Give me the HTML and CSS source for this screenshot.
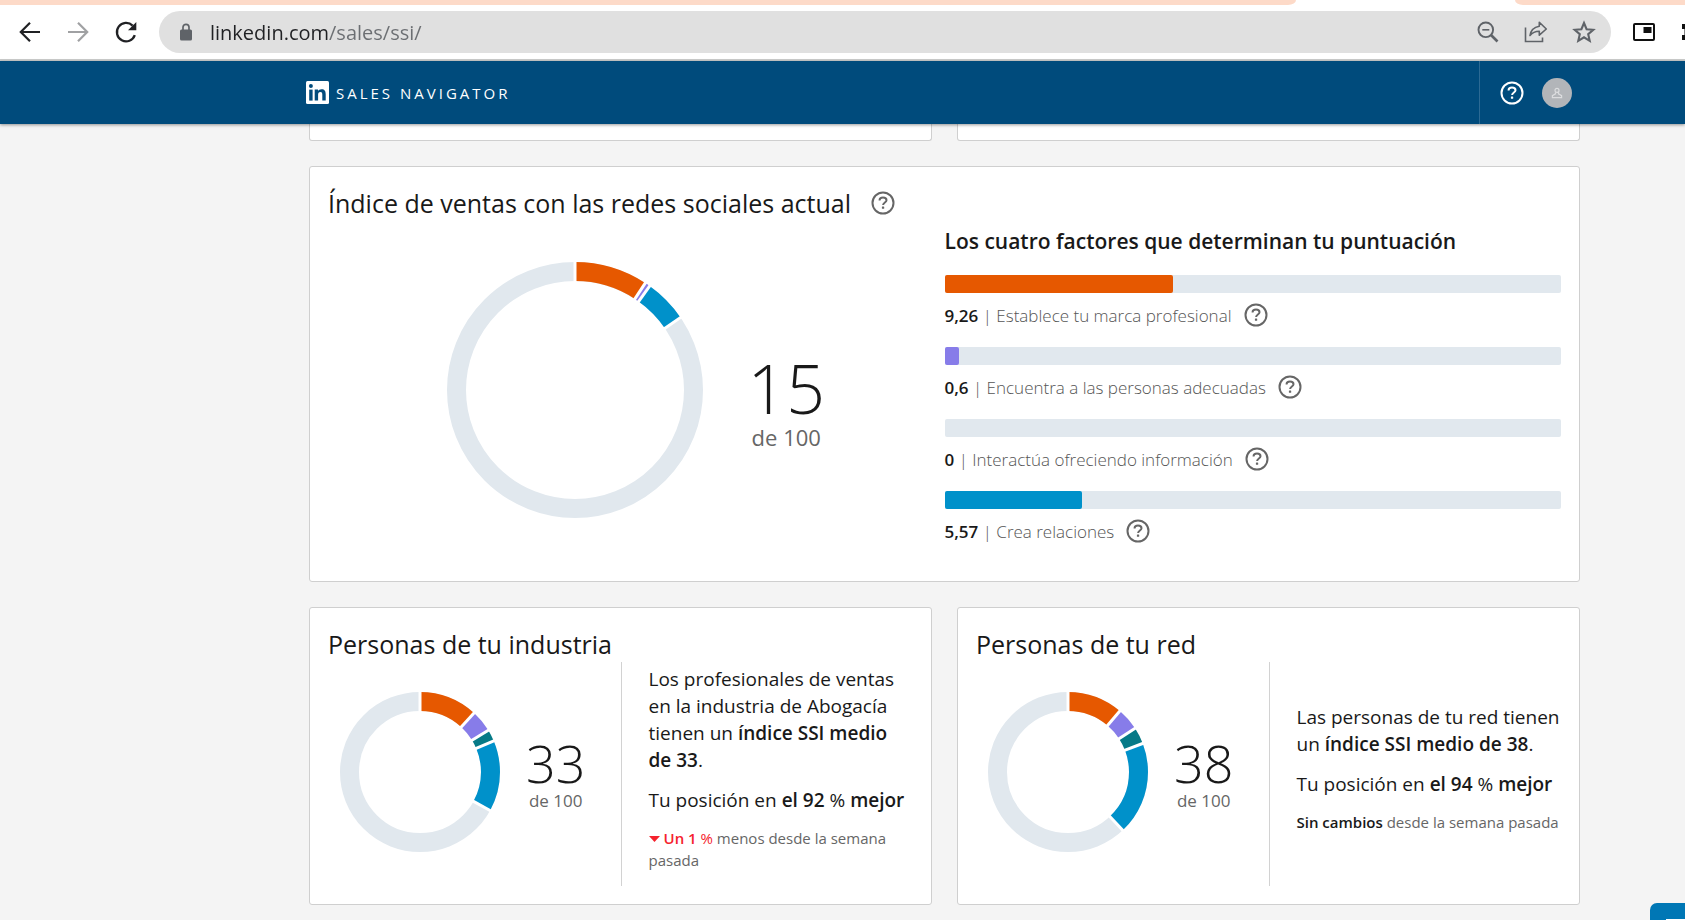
FILE: index.html
```html
<!DOCTYPE html>
<html lang="es">
<head>
<meta charset="utf-8">
<title>Social Selling Index</title>
<link rel="stylesheet" href="styles.css">
</head>
<body>
<svg class="defs" aria-hidden="true">
  <symbol id="help" viewBox="0 0 24 24">
    <circle cx="12" cy="12" r="10.5" fill="none" stroke="currentColor" stroke-width="2"/>
    <path d="M8.6 9.6V9c0-1.400 1.300-2.500 3.400-2.500s3.500 1.100 3.500 2.700c0 2.200-3.400 2.400-3.400 4.800" fill="none" stroke="currentColor" stroke-width="2"/>
    <rect x="10.900" y="15.500" width="2.300" height="2.300" rx=".5" fill="currentColor"/>
  </symbol>
</svg>

<header class="browser">
  <div class="tabs"><span class="tab-strip tab-strip-left"></span><span class="tab-strip tab-strip-right"></span></div>
  <div class="toolbar">
    <button class="tool back" aria-label="Atrás"><svg viewBox="0 0 24 24"><path d="M22 12H3.500M12 2.800 2.800 12l9.200 9.200" fill="none" stroke="currentColor" stroke-width="2.200"/></svg></button>
    <button class="tool forward" aria-label="Adelante"><svg viewBox="0 0 24 24"><path d="M2 12h18.500M12 2.800l9.200 9.200-9.200 9.200" fill="none" stroke="currentColor" stroke-width="2.200"/></svg></button>
    <button class="tool reload" aria-label="Recargar"><svg viewBox="0 0 24 24"><path d="M20.800 15.200A9.200 9.200 0 1 1 18.600 5.600" fill="none" stroke="currentColor" stroke-width="2.300"/><path d="M22.300 2v8.300H14z" fill="currentColor"/></svg></button>
    <div class="omnibox">
      <svg class="lock" viewBox="0 0 12 18" aria-hidden="true"><path d="M3 7V4.300a3 3 0 0 1 6 0V7" fill="none" stroke="currentColor" stroke-width="1.700"/><rect x="0" y="6.500" width="12" height="11" rx="1.500" fill="currentColor"/></svg>
      <input class="address" type="text" aria-label="Dirección" value="linkedin.com/sales/ssi/">
      <button class="tool" aria-label="Zoom"><svg viewBox="0 0 24 24"><circle cx="9.800" cy="9.800" r="7.300" fill="none" stroke="currentColor" stroke-width="1.900"/><path d="M6.300 9.800h7" stroke="currentColor" stroke-width="1.600"/><path d="M15 15l6.500 6.500" stroke="currentColor" stroke-width="2.600"/></svg></button>
      <button class="tool" aria-label="Compartir"><svg viewBox="0 0 24 24"><path d="M1.500 7.500v14h17v-4" fill="none" stroke="currentColor" stroke-width="1.600"/><path d="M15.300 2.200 22.300 9l-7 6.200v-4c-4.300 0-7 1.300-9.300 4.300.7-5 3.800-8.300 9.300-9.300z" fill="none" stroke="currentColor" stroke-width="1.600" stroke-linejoin="round"/></svg></button>
      <button class="tool" aria-label="Añadir a marcadores"><svg viewBox="0 0 24 24"><path d="M12 3l2.600 6.200 6.700.6-5.100 4.400 1.500 6.600L12 17.300l-5.700 3.500 1.500-6.600-5.100-4.400 6.700-.6z" fill="none" stroke="currentColor" stroke-width="2.100"/></svg></button>
    </div>
    <button class="tool pip" aria-label="Imagen en imagen"><svg viewBox="0 0 24 24"><rect x="2" y="4" width="20" height="16" rx="1" fill="none" stroke="currentColor" stroke-width="2"/><rect x="11.500" y="7" width="8" height="6" fill="currentColor"/></svg></button>
    <button class="tool extensions" aria-label="Extensiones"><svg viewBox="0 0 24 24"><path d="M4 4h12v16H4v-5h2.500V9H4z" fill="currentColor"/></svg></button>
  </div>
</header>

<nav class="nav">
  <a class="brand" href="#" aria-label="Sales Navigator">
    <svg class="brand-mark" viewBox="0 0 23 23" aria-hidden="true"><rect width="23" height="23" rx="1.500" fill="#fff"/><g fill="#004b7c"><circle cx="4.900" cy="5.100" r="2"/><rect x="3.200" y="8.600" width="3.400" height="11"/><path d="M8.700 8.600H12v1.500c.6-1.100 1.800-1.800 3.500-1.800 3.300 0 4.200 2 4.200 5v6.300h-3.400v-5.800c0-1.500-.2-2.700-1.900-2.700s-2.300 1.200-2.300 2.700v5.800H8.700z"/></g></svg>
    <span>SALES NAVIGATOR</span>
  </a>
  <div class="nav-tools">
    <button class="icon-button" aria-label="Ayuda"><svg><use href="#help"/></svg></button>
    <button class="avatar" aria-label="Tu cuenta"><svg viewBox="0 0 12 12"><circle cx="6" cy="3.400" r="2" fill="none" stroke="currentColor" stroke-width="1.200"/><path d="M4.500 5.300v1.500L1.400 8.700v2h9.200v-2L7.500 6.800V5.300" fill="none" stroke="currentColor" stroke-width="1.200"/></svg></button>
  </div>
</nav>

<main class="page">
  <div class="row">
    <div class="card card-tail"></div>
    <div class="card card-tail"></div>
  </div>

  <section class="card current">
    <div class="current-left">
      <h1 class="title">Índice de ventas con las redes sociales actual <button class="icon-button" aria-label="Más información"><svg><use href="#help"/></svg></button></h1>
      <div class="gauge">
        <svg class="donut donut-large" viewBox="-128 -128 256 256" role="img" aria-label="15 de 100">
          <g fill="none" stroke-width="19" transform="rotate(-90)">
            <circle r="118.500" stroke="#e1e8ee"/>
            <circle r="118.500" stroke="#e65800" pathLength="360" stroke-dasharray="33.300 360"/>
            <circle r="118.500" stroke="#877ce9" pathLength="360" stroke-dasharray="2.200 360" stroke-dashoffset="-33.300"/>
            <circle r="118.500" stroke="#0091ca" pathLength="360" stroke-dasharray="20 360" stroke-dashoffset="-35.500"/>
          </g>
          <g stroke="#fff" stroke-width="3">
            <path d="M0-107v-23"/>
            <path d="M0-107v-23" transform="rotate(33.300)"/>
            <path d="M0-107v-23" transform="rotate(35.700)"/>
            <path d="M0-107v-23" transform="rotate(55.500)"/>
          </g>
        </svg>
        <p class="score score-large"><span class="score-value">15</span><span class="score-total">de 100</span></p>
      </div>
    </div>
    <div class="factors">
      <h2 class="factors-title">Los cuatro factores que determinan tu puntuación</h2>
      <ul class="factor-list">
        <li class="factor"><div class="bar"><div class="fill orange" style="width:37%"></div></div><p class="factor-label"><span><b>9,26</b> | Establece tu marca profesional</span><button class="icon-button" aria-label="Más información"><svg><use href="#help"/></svg></button></p></li>
        <li class="factor"><div class="bar"><div class="fill purple" style="width:2.4%"></div></div><p class="factor-label"><span><b>0,6</b> | Encuentra a las personas adecuadas</span><button class="icon-button" aria-label="Más información"><svg><use href="#help"/></svg></button></p></li>
        <li class="factor"><div class="bar"></div><p class="factor-label"><span><b>0</b> | Interactúa ofreciendo información</span><button class="icon-button" aria-label="Más información"><svg><use href="#help"/></svg></button></p></li>
        <li class="factor"><div class="bar"><div class="fill blue" style="width:22.3%"></div></div><p class="factor-label"><span><b>5,57</b> | Crea relaciones</span><button class="icon-button" aria-label="Más información"><svg><use href="#help"/></svg></button></p></li>
      </ul>
    </div>
  </section>

  <div class="row">
    <section class="card group">
      <h2 class="title">Personas de tu industria</h2>
      <div class="group-body">
        <div class="group-gauge">
          <svg class="donut donut-small" viewBox="-80 -80 160 160" role="img" aria-label="33 de 100">
            <g fill="none" stroke-width="19" transform="rotate(-90)">
              <circle r="70.500" stroke="#e1e8ee"/>
              <circle r="70.500" stroke="#e65800" pathLength="360" stroke-dasharray="42.500 360"/>
              <circle r="70.500" stroke="#877ce9" pathLength="360" stroke-dasharray="16.100 360" stroke-dashoffset="-42.500"/>
              <circle r="70.500" stroke="#067a87" pathLength="360" stroke-dasharray="8.600 360" stroke-dashoffset="-58.600"/>
              <circle r="70.500" stroke="#0091ca" pathLength="360" stroke-dasharray="51.600 360" stroke-dashoffset="-67.200"/>
            </g>
            <g stroke="#fff" stroke-width="3">
              <path d="M0-59v-23"/>
              <path d="M0-59v-23" transform="rotate(42.500)"/>
              <path d="M0-59v-23" transform="rotate(58.600)"/>
              <path d="M0-59v-23" transform="rotate(67.200)"/>
              <path d="M0-59v-23" transform="rotate(118.800)"/>
            </g>
          </svg>
          <p class="score score-small"><span class="score-value">33</span><span class="score-total">de 100</span></p>
        </div>
        <div class="summary">
          <p>Los profesionales de ventas en la industria de Abogacía tienen un <b>índice SSI medio de 33</b>.</p>
          <p>Tu posición en <b>el 92</b> % <b>mejor</b></p>
          <p class="change"><svg class="down" viewBox="0 0 11 6" aria-hidden="true"><path d="M0 0h11L5.500 6z" fill="currentColor"/></svg><span class="loss"><b>Un 1</b> %</span> menos desde la semana pasada</p>
        </div>
      </div>
    </section>
    <section class="card group">
      <h2 class="title">Personas de tu red</h2>
      <div class="group-body">
        <div class="group-gauge">
          <svg class="donut donut-small" viewBox="-80 -80 160 160" role="img" aria-label="38 de 100">
            <g fill="none" stroke-width="19" transform="rotate(-90)">
              <circle r="70.500" stroke="#e1e8ee"/>
              <circle r="70.500" stroke="#e65800" pathLength="360" stroke-dasharray="40.400 360"/>
              <circle r="70.500" stroke="#877ce9" pathLength="360" stroke-dasharray="16.500 360" stroke-dashoffset="-40.400"/>
              <circle r="70.500" stroke="#067a87" pathLength="360" stroke-dasharray="12.200 360" stroke-dashoffset="-56.900"/>
              <circle r="70.500" stroke="#0091ca" pathLength="360" stroke-dasharray="67.700 360" stroke-dashoffset="-69.100"/>
            </g>
            <g stroke="#fff" stroke-width="3">
              <path d="M0-59v-23"/>
              <path d="M0-59v-23" transform="rotate(40.400)"/>
              <path d="M0-59v-23" transform="rotate(56.900)"/>
              <path d="M0-59v-23" transform="rotate(69.100)"/>
              <path d="M0-59v-23" transform="rotate(136.800)"/>
            </g>
          </svg>
          <p class="score score-small"><span class="score-value">38</span><span class="score-total">de 100</span></p>
        </div>
        <div class="summary">
          <p>Las personas de tu red tienen un <b>índice SSI medio de 38</b>.</p>
          <p>Tu posición en <b>el 94</b> % <b>mejor</b></p>
          <p class="change"><b>Sin cambios</b> desde la semana pasada</p>
        </div>
      </div>
    </section>
  </div>
</main>

<button class="chat" aria-label="Chat"><svg viewBox="0 0 24 24"><path d="M1 1h22v16H9l-5 5v-5H1z" fill="none" stroke="currentColor" stroke-width="2"/></svg></button>
</body>
</html>
```
FILE: styles.css
```css
* { box-sizing: border-box; }

body {
  margin: 0;
  height: 100vh;
  overflow: hidden;
  background: #f4f4f4;
  color: #191919;
  font-family: "Open Sans", "Noto Sans", sans-serif;
  font-size: 19px;
}

h1, h2, p, ul { margin: 0; padding: 0; font-weight: 400; }
ul { list-style: none; }
b { font-weight: 600; }
svg { display: block; }

button {
  margin: 0;
  padding: 0;
  border: 0;
  background: none;
  color: inherit;
  font: inherit;
  cursor: pointer;
  flex: none;
}

.defs { position: absolute; width: 0; height: 0; }

.browser { background: #fff; border-bottom: 2px solid #cbcccb; }
.tabs { display: flex; height: 5px; gap: 219px; }
.tab-strip { background: #fddac8; }
.tab-strip-left { flex: 1; border-bottom-right-radius: 8px 5px; }
.tab-strip-right { width: 170px; border-bottom-left-radius: 8px 5px; }

.toolbar { display: flex; align-items: center; height: 54px; padding-left: 18px; overflow: hidden; }
.tool { width: 24px; height: 24px; }
.tool svg { width: 24px; height: 24px; }
.back { color: #202124; }
.forward { margin-left: 24px; color: #a0a1a3; }
.reload { margin-left: 24px; color: #202124; }

.omnibox {
  display: flex;
  align-items: center;
  flex: 1;
  gap: 24px;
  height: 42px;
  margin-left: 21px;
  padding: 0 15px 0 21px;
  border-radius: 21px;
  background: #e0e0e0;
  color: #5f6368;
}
.lock { width: 12px; height: 18px; flex: none; }
.address {
  flex: 1;
  min-width: 0;
  height: 32px;
  margin-left: -6px;
  padding: 0;
  border: 0;
  outline: 0;
  background: linear-gradient(to right, #202124 118px, #6b6e72 118px);
  -webkit-background-clip: text;
  background-clip: text;
  color: transparent;
  font: 20px "Open Sans", "Noto Sans", sans-serif;
}
.pip { margin-left: 21px; color: #101010; }
.extensions { margin: 0 -17px 0 22px; color: #101010; }

.nav {
  position: relative;
  display: flex;
  justify-content: space-between;
  height: 63px;
  padding: 0 113px 0 306px;
  background: #004b7c;
  color: #fff;
  box-shadow: 0 1px 3px rgba(0, 0, 0, .4);
}
.brand { display: flex; align-items: center; gap: 7px; color: #fff; font-size: 15px; letter-spacing: 3px; text-decoration: none; }
.brand-mark { width: 23px; height: 23px; }
.nav-tools { display: flex; align-items: center; gap: 18px; padding-left: 20px; border-left: 1px solid #2c6a94; }
.icon-button, .icon-button svg { display: block; width: 24px; height: 24px; }
.avatar { display: grid; place-items: center; width: 30px; height: 30px; border-radius: 50%; background: #b2b5b9; color: #dcdddf; }
.avatar svg { width: 12px; height: 12px; }

.page { display: grid; gap: 25px; padding: 0 105px 0 309px; }
.row { display: grid; grid-template-columns: 1fr 1fr; gap: 25px; }
.card { padding: 18px; border: 1px solid #cfcfcf; border-radius: 3px; background: #fff; }
.card-tail { height: 17px; padding: 0; border-top: 0; border-radius: 0 0 3px 3px; }

.title { display: flex; align-items: center; gap: 20px; font-size: 25px; line-height: 36px; white-space: nowrap; }
.title .icon-button, .factor-label .icon-button { color: #666; }

.current { display: grid; grid-template-columns: 1fr 1fr; }
.gauge { display: flex; justify-content: center; align-items: center; gap: 44px; padding-top: 41px; }
.donut { flex: none; }
.donut-large { width: 256px; height: 256px; }
.donut-small { width: 160px; height: 160px; }

.score { display: flex; flex-direction: column; align-items: center; }
.score-value { font-weight: 300; }
.score-total { color: #666; }
.score-large { padding-top: 28px; }
.score-large .score-value { font-size: 68px; line-height: 66px; }
.score-large .score-total { font-size: 22px; line-height: 32px; }
.score-small { padding-top: 6px; }
.score-small .score-value { font-size: 52px; line-height: 52px; }
.score-small .score-total { font-size: 17px; line-height: 24px; }

.factors { padding-top: 40px; }
.factors-title { margin-bottom: 18px; font-size: 21px; font-weight: 600; line-height: 32px; white-space: nowrap; }
.bar { height: 18px; border-radius: 2px; background: #e1e8ee; }
.fill { height: 100%; border-radius: 2px; }
.orange { background: #e65800; }
.purple { background: #877ce9; }
.blue { background: #0091ca; }
.factor-label { display: flex; align-items: center; gap: 12px; height: 54px; padding-bottom: 10px; color: #555; font-size: 17px; font-weight: 300; }
.factor-label b { color: #191919; }

.group-body { display: grid; grid-template-columns: 1fr 1fr; height: 224px; }
.group-gauge { display: flex; align-items: center; gap: 26px; padding: 0 0 4px 12px; }
.summary { display: flex; flex-direction: column; justify-content: center; gap: 13px; padding: 0 0 12px 27px; border-left: 1px solid #d2d2d2; font-size: 19px; line-height: 27px; }
.change { color: #666; font-size: 15px; line-height: 22px; }
.change b { color: #191919; }
.change .loss, .change .loss b { color: #f5222d; }
.down { display: inline-block; width: 11px; height: 6px; margin: 0 4px 2px 0; color: #f5222d; }

.chat {
  position: fixed;
  right: -25px;
  bottom: -43px;
  display: grid;
  place-items: center;
  width: 60px;
  height: 60px;
  border-radius: 7px;
  background: #0077b5;
  color: #fff;
}
.chat svg { width: 28px; height: 28px; }
```
